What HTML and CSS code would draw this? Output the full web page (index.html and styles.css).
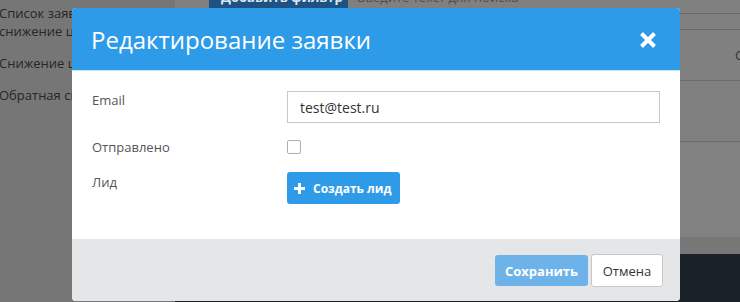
FILE: index.html
```html
<!DOCTYPE html>
<html lang="ru">
<head>
<meta charset="utf-8">
<title>Редактирование заявки</title>
<link rel="stylesheet" href="styles.css">
</head>
<body>
<div class="page">
  <aside class="sidebar">
    <div class="side-item">Список заявок на снижение цены</div>
    <div class="side-item">Снижение цены</div>
    <div class="side-item">Обратная связь</div>
  </aside>
  <main class="main">
    <div class="toolbar">
      <span class="filter-btn">Добавить фильтр</span>
      <span class="search">Введите текст для поиска</span>
    </div>
    <div class="thead"></div>
    <div class="trow trow-1"><span class="cell">Создана</span></div>
    <div class="trow trow-2"></div>
    <div class="tfill"></div>
    <div class="band"></div>
    <div class="dark"></div>
  </main>
</div>

<div class="modal">
  <div class="modal-header">
    <h1 class="modal-title">Редактирование заявки</h1>
    <svg class="close" width="18" height="18" viewBox="0 0 18 18"><path d="M2.5 2.5 L15.5 15.5 M15.5 2.5 L2.5 15.5" stroke="#fff" stroke-width="4" stroke-linecap="butt"/></svg>
  </div>
  <div class="modal-body">
    <div class="form-row">
      <label class="label">Email</label>
      <input class="text-input" type="text" value="test@test.ru">
    </div>
    <div class="form-row">
      <label class="label">Отправлено</label>
      <input class="checkbox" type="checkbox">
    </div>
    <div class="form-row row-lead">
      <label class="label">Лид</label>
      <button class="btn-create"><svg width="11" height="11" viewBox="0 0 11 11"><path d="M5.5 0 V11 M0 5.5 H11" stroke="#fff" stroke-width="3"/></svg><span>Создать лид</span></button>
    </div>
  </div>
  <div class="modal-footer">
    <button class="btn btn-save">Сохранить</button>
    <button class="btn btn-cancel">Отмена</button>
  </div>
</div>
</body>
</html>
```
FILE: styles.css
```css
* { box-sizing: border-box; }
html, body { margin: 0; padding: 0; }
body {
  width: 740px;
  height: 302px;
  overflow: hidden;
  background: #808080;
  font-family: "Open Sans", "Liberation Sans", sans-serif;
  position: relative;
}
.page {
  display: flex;
  height: 302px;
}
.sidebar {
  width: 175px;
  flex: none;
  background: #767676;
  padding-top: 4px;
  color: #262626;
  font-size: 13px;
  line-height: 18px;
  overflow: hidden;
}
.side-item {
  margin-bottom: 14px;
  margin-left: -1px;
}
.main {
  flex: 1;
  display: flex;
  flex-direction: column;
  min-width: 0;
}
.toolbar {
  height: 14px;
  border-bottom: 1px solid #686868;
  display: flex;
  overflow: hidden;
  padding-left: 34px;
}
.filter-btn {
  background: #1d5282;
  color: #dce6ef;
  font-weight: 700;
  font-size: 13px;
  height: 30px;
  line-height: 30px;
  margin-top: -18px;
  padding: 0 12px;
  width: 139px;
  white-space: nowrap;
}
.search {
  color: #4e4e4e;
  font-size: 13px;
  line-height: 30px;
  height: 30px;
  margin-top: -18px;
  padding-left: 9px;
  white-space: nowrap;
}
.thead {
  height: 16px;
  border-bottom: 1px solid #686868;
}
.trow {
  border-bottom: 1px solid #6c6c6c;
  display: flex;
  align-items: center;
  justify-content: flex-end;
  overflow: hidden;
}
.trow-1 { height: 51px; }
.trow-2 { height: 61px; }
.cell {
  color: #333;
  font-size: 13px;
  width: 5px;
  white-space: nowrap;
}
.tfill { height: 95px; background: #818181; }
.band { height: 17px; background: #777; }
.dark { flex: 1; background: #1b2129; }

/* modal */
.modal {
  position: absolute;
  left: 72px;
  top: 8px;
  width: 608px;
  height: 293px;
  background: #fff;
  border-radius: 4px;
  overflow: hidden;
  display: flex;
  flex-direction: column;
}
.modal-header {
  height: 63px;
  flex: none;
  background: #2d9be8;
  border-bottom: 1px solid #c4e2f8;
  display: flex;
  align-items: center;
  justify-content: space-between;
  padding: 0 23px 0 19px;
}
.modal-title {
  margin: 0;
  color: #fff;
  font-weight: 400;
  font-size: 24px;
  line-height: 30px;
  margin-top: 1px;
}
.close { display: block; margin-top: 1px; }
.modal-body {
  padding: 20px 20px 35px 20px;
  display: flex;
  flex-direction: column;
  gap: 15px;
  flex: none;
}
.form-row {
  display: grid;
  grid-template-columns: 195px 1fr;
  align-items: start;
}
.row-lead { margin-top: 1px; }
.label {
  font-size: 13px;
  line-height: 18px;
  color: #555;
}
.row-lead .label { padding-top: 1px; }
.text-input {
  height: 32px;
  border: 1px solid #c8c8c8;
  padding: 0 12px;
  font-family: inherit;
  font-size: 14px;
  color: #333;
  outline: none;
  margin: 0;
  width: 100%;
}
.checkbox {
  appearance: none;
  -webkit-appearance: none;
  width: 14px;
  height: 14px;
  border: 1px solid #b0b0b0;
  border-radius: 2px;
  margin: 2px 0 0 0;
  background: #fff;
}
.btn-create {
  justify-self: start;
  width: 113px;
  height: 32px;
  border: none;
  border-radius: 3px;
  background: #2d9be8;
  color: #fff;
  font-family: inherit;
  font-weight: 700;
  font-size: 12px;
  display: flex;
  align-items: center;
  gap: 8px;
  padding: 0 0 0 7px;
  margin: 0;
}
.btn-create svg { display: block; margin-top: 1px; }
.modal-footer {
  flex: 1;
  background: #e5e6e8;
  display: flex;
  justify-content: flex-end;
  align-items: flex-start;
  padding: 15px 17px 0 0;
}
.btn {
  height: 33px;
  border-radius: 3px;
  font-family: inherit;
  font-size: 13px;
  margin: 0;
}
.btn-save {
  width: 93px;
  height: 31px;
  margin-top: 1px;
  background: #6db3ea;
  border: none;
  color: #fff;
  font-weight: 700;
  margin-right: 3px;
}
.btn-cancel {
  width: 72px;
  background: #fff;
  border: 1px solid #c8c8c8;
  color: #333;
}
```
